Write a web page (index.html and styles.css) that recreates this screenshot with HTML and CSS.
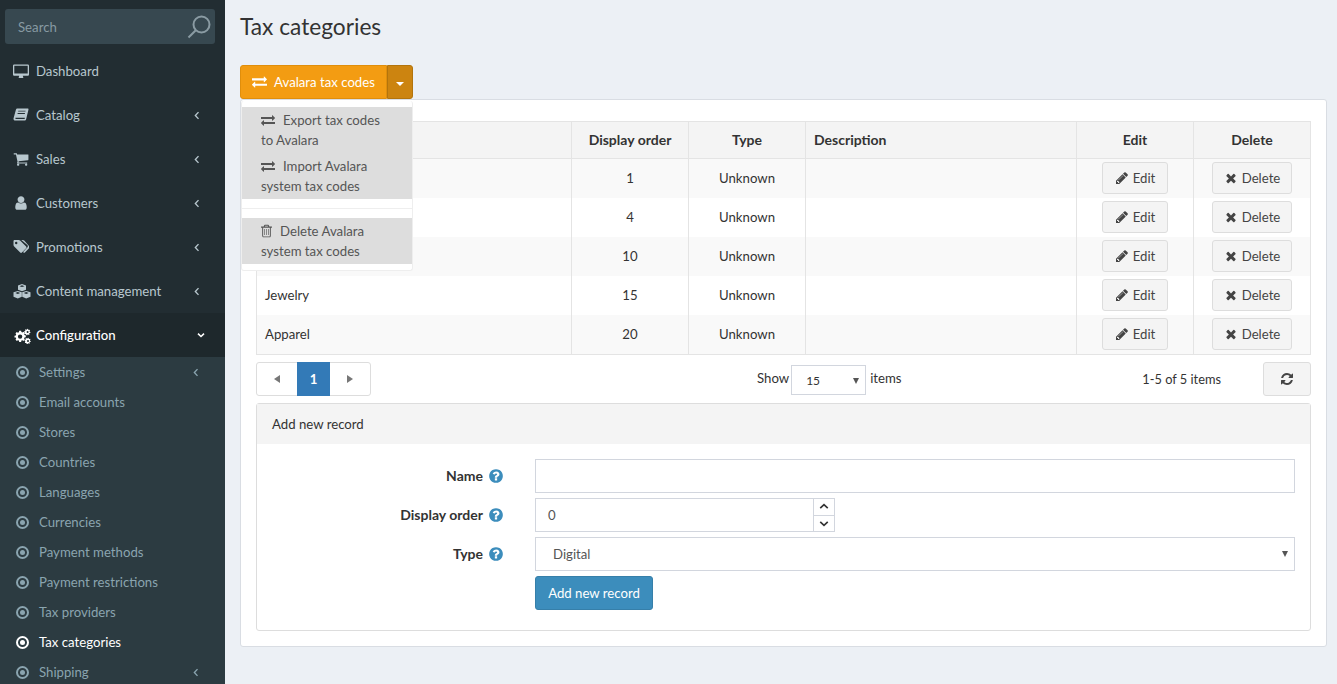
FILE: index.html
```html
<!DOCTYPE html>
<html lang="en">
<head>
    <meta charset="UTF-8">
    <meta name="viewport" content="width=device-width, initial-scale=1.0">
    <title>Tax categories</title>
    <link rel="stylesheet" href="styles.css">
</head>
<body>
    <svg class="sprite" aria-hidden="true">
        <symbol id="i-exchange" viewBox="0 0 1792 1792"><path d="M1792 1184v192q0 13-9.500 22.500t-22.500 9.500h-1376v192q0 13-9.500 22.500t-22.500 9.500q-12 0-24-10l-319-320q-9-9-9-22 0-14 9-23l320-320q9-9 23-9 13 0 22.500 9.500t9.500 22.500v192h1376q13 0 22.500 9.500t9.500 22.500zm0-544q0 14-9 23l-320 320q-9 9-23 9-13 0-22.500-9.500t-9.500-22.500v-192h-1376q-13 0-22.500-9.500t-9.500-22.500v-192q0-13 9.500-22.500t22.500-9.500h1376v-192q0-14 9-23t23-9q12 0 24 10l319 319q9 9 9 23z"/></symbol>
        <symbol id="i-times" viewBox="0 0 1792 1792"><path d="M1490 1322q0 40-28 68l-136 136q-28 28-68 28t-68-28l-294-294-294 294q-28 28-68 28t-68-28l-136-136q-28-28-28-68t28-68l294-294-294-294q-28-28-28-68t28-68l136-136q28-28 68-28t68 28l294 294 294-294q28-28 68-28t68 28l136 136q28 28 28 68t-28 68l-294 294 294 294q28 28 28 68z"/></symbol>
        <symbol id="i-pencil" viewBox="0 0 1792 1792"><path d="M491 1536l91-91-235-235-91 91v107h128v128h107zm523-928q0-22-22-22-10 0-17 7l-542 542q-7 7-7 17 0 22 22 22 10 0 17-7l542-542q7-7 7-17zm-54-192l416 416-832 832h-416v-416zm683 96q0 53-37 90l-166 166-416-416 166-165q36-38 90-38 53 0 91 38l235 234q37 39 37 91z"/></symbol>
        <symbol id="i-refresh" viewBox="0 0 1792 1792"><path d="M1639 1056q0 5-1 7-64 268-268 434.500t-478 166.500q-146 0-282.500-55t-243.500-157l-129 129q-19 19-45 19t-45-19-19-45v-448q0-26 19-45t45-19h448q26 0 45 19t19 45-19 45l-137 137q71 66 161 102t187 36q134 0 250-65t186-179q11-17 53-117 8-23 30-23h192q13 0 22.500 9.500t9.500 22.500zm25-800v448q0 26-19 45t-45 19h-448q-26 0-45-19t-19-45 19-45l138-138q-148-137-349-137-134 0-250 65t-186 179q-11 17-53 117-8 23-30 23h-199q-13 0-22.500-9.500t-9.500-22.500v-7q65-268 270-434.500t480-166.500q146 0 284 55.500t245 156.500l130-129q19-19 45-19t45 19 19 45z"/></symbol>
        <symbol id="i-question" viewBox="0 0 1792 1792"><path d="M1024 1376v-192q0-14-9-23t-23-9h-192q-14 0-23 9t-9 23v192q0 14 9 23t23 9h192q14 0 23-9t9-23zm256-672q0-88-55.500-163t-138.500-116-170-41q-243 0-371 213-15 24 8 42l132 100q7 6 19 6 16 0 25-12 53-68 86-92 34-24 86-24 48 0 85.500 26t37.500 59q0 38-20 61t-68 45q-63 28-115.500 86.500t-52.500 125.500v36q0 14 9 23t23 9h192q14 0 23-9t9-23q0-19 21.500-49.500t54.500-49.500q32-18 49-28.500t46-35 44.500-48 28-60.500 12.500-81zm384 192q0 209-103 385.500t-279.500 279.500-385.500 103-385.500-103-279.500-279.500-103-385.500 103-385.500 279.500-279.500 385.500-103 385.500 103 279.500 279.500 103 385.500z"/></symbol>
        <symbol id="i-user" viewBox="0 0 1792 1792"><path d="M1536 1399q0 109-62.500 187t-150.500 78h-854q-88 0-150.500-78t-62.500-187q0-85 8.500-160.500t31.500-152 58.500-131 94-89 134.500-34.500q131 128 313 128t313-128q76 0 134.500 34.500t94 89 58.500 131 31.500 152 8.500 160.500zm-256-887q0 159-112.500 271.500t-271.500 112.500-271.500-112.500-112.500-271.500 112.500-271.500 271.500-112.500 271.500 112.500 112.500 271.500z"/></symbol>
        <symbol id="i-cart" viewBox="0 0 1792 1792"><path d="M704 1536q0 52-38 90t-90 38-90-38-38-90 38-90 90-38 90 38 38 90zm896 0q0 52-38 90t-90 38-90-38-38-90 38-90 90-38 90 38 38 90zm128-1088v512q0 24-16.500 42.500t-40.500 21.500l-1044 122q13 60 13 70 0 16-24 64h920q26 0 45 19t19 45-19 45-45 19h-1024q-26 0-45-19t-19-45q0-11 8-31.500t16-36 21.500-40 15.500-29.500l-177-823h-204q-26 0-45-19t-19-45 19-45 45-19h256q16 0 28.500 6.500t19.500 15.500 13 24.500 8 26 5.500 29.500 4.500 26h1201q26 0 45 19t19 45z"/></symbol>
        <symbol id="i-desktop" viewBox="0 0 16 16"><path d="M1.300 1.500h13.400c.6 0 1.300.5 1.300 1.300v8.700c0 .7-.6 1.300-1.300 1.300H9.800c0 .8.600 1.300.600 1.700 0 .3-.2.500-.5.500H6.100c-.3 0-.5-.2-.5-.5 0-.4.600-.9.600-1.700H1.300C.6 12.800 0 12.200 0 11.500V2.800c0-.8.700-1.300 1.300-1.300zm0 1.200v7.900h13.400V2.700z"/></symbol>
        <symbol id="i-book" viewBox="0 0 16 16"><path d="M4.500 1.500h10.200c.6 0 .9.500.8 1l-2.300 9.400c-.2.900-.9 1.600-1.800 1.600H2.300c-1.100 0-2-.9-1.800-2.100l2.400-8.700c.2-.7.800-1.200 1.600-1.200zm.8 2.300-.2.800h7.300l.2-.8zm-.6 2.300-.2.800h7.300l.2-.8zM2.500 10.800c-.3.800.1 1.300.7 1.300h8c.2 0 .4-.1.500-.4l.2-.9z"/></symbol>
        <symbol id="i-tags" viewBox="0 0 16 16"><path d="M.5 2.200C.5 1.500 1 1 1.700 1h4c.5 0 1 .3 1.400.6l6 6c.5.500.5 1.200 0 1.700L8.900 13.500c-.5.500-1.200.500-1.700 0l-6-6C.8 7.100.5 6.600.5 6.100zm2.700.6a1.200 1.200 0 1 0 0 2.400 1.200 1.200 0 0 0 0-2.400zM8.300 1h1.500c.5 0 1 .3 1.400.6l5 5.700c.5.500.5 1.200 0 1.700l-4.300 4.500c-.4.400-1 .4-1.400 0l-.4-.4 4.200-4.500c.7-.7.700-1.800 0-2.500z"/></symbol>
        <symbol id="i-cubes" viewBox="0 0 18 16"><path d="M9 .6 13 2v4.200l-4 1.500-4-1.500V2zM9 1.800 6.500 2.700 9 3.600l2.500-.9zM4.800 7.400l4 1.400v4.400l-4 1.700-4.300-1.700V8.800zm0 1.200-2.500.9 2.500.9 2.400-.9zM13.200 7.400l4.300 1.400v4.400l-4.300 1.700-4-1.700V8.800zm0 1.200-2.400.9 2.400.9 2.500-.9z"/></symbol>
        <symbol id="i-cogs" viewBox="0 0 18 16"><path d="M6.200 3.200h1.900l.3 1.300 1 .4 1.100-.7 1.300 1.300-.7 1.100.4 1 1.300.3v1.800l-1.300.3-.4 1 .7 1.100-1.300 1.300-1.100-.7-1 .4-.3 1.300H6.200l-.3-1.300-1-.4-1.100.7-1.300-1.300.7-1.100-.4-1L1.500 10V8.200l1.300-.3.4-1-.7-1.100 1.300-1.300 1.100.7 1-.4zm.9 3.700a2.200 2.200 0 1 0 0 4.400 2.200 2.200 0 0 0 0-4.400zM14.500 1.200l.7.200.1.800.5.300.8-.2.500.7-.5.600.1.600.7.400-.1.800-.8.200-.3.500.3.800-.6.500-.7-.4-.6.1-.4.700-.8-.1-.2-.8-.5-.3-.8.200-.4-.7.500-.6-.1-.6-.7-.4.100-.8.800-.2.300-.5-.3-.8.700-.5.600.5.600-.1zm.1 2.300a1 1 0 1 0 0 2 1 1 0 0 0 0-2zM15 10.200l.7.200.1.800.5.300.8-.2.400.7-.5.600v.6l.7.400-.1.800-.8.200-.3.500.2.800-.6.400-.6-.5-.6.100-.4.700-.8-.1-.2-.8-.5-.3-.8.200-.4-.7.500-.6-.1-.6-.6-.4.100-.8.800-.2.300-.5-.3-.8.700-.4.600.5.600-.1zm0 2.300a1 1 0 1 0 0 2 1 1 0 0 0 0-2z"/></symbol>
        <symbol id="i-trash" viewBox="0 0 14 16"><path d="M5 0h4c.6 0 1 .4 1.100.9l.5 1.300h3c.2 0 .4.200.4.400v.8c0 .2-.2.400-.4.400h-1.100v10.100c0 1.100-.7 2.100-1.600 2.100H3.100c-.9 0-1.600-.9-1.600-2v-10.200H.4c-.2 0-.4-.2-.4-.4v-.8c0-.2.200-.4.400-.4h3l.5-1.300C4 .4 4.400 0 5 0zm-.1 2.200h4.200l-.4-1H5.300zM2.700 3.800v10.200c0 .6.300.9.400.9h7.800c.1 0 .4-.3.400-.9V3.800zM4.300 5.600h.8v7.400h-.8zm2.300 0h.8v7.400h-.8zm2.300 0h.8v7.400h-.8z"/></symbol>
    </svg>

    <div class="app">
        <aside class="sidebar">
            <div class="search">
                <span>Search</span>
                <svg class="search-icon" viewBox="0 0 24 24"><circle cx="14.500" cy="9.500" r="8"/><path d="M8.800 15.200 1.500 22.500"/></svg>
            </div>
            <ul class="menu">
                <li class="menu-item"><svg class="mi"><use href="#i-desktop"/></svg><span>Dashboard</span></li>
                <li class="menu-item"><svg class="mi"><use href="#i-book"/></svg><span>Catalog</span><svg class="angle" viewBox="0 0 8 12"><path d="M6 1.500 1.800 6 6 10.500"/></svg></li>
                <li class="menu-item"><svg class="mi"><use href="#i-cart"/></svg><span>Sales</span><svg class="angle" viewBox="0 0 8 12"><path d="M6 1.500 1.800 6 6 10.500"/></svg></li>
                <li class="menu-item"><svg class="mi"><use href="#i-user"/></svg><span>Customers</span><svg class="angle" viewBox="0 0 8 12"><path d="M6 1.500 1.800 6 6 10.500"/></svg></li>
                <li class="menu-item"><svg class="mi"><use href="#i-tags"/></svg><span>Promotions</span><svg class="angle" viewBox="0 0 8 12"><path d="M6 1.500 1.800 6 6 10.500"/></svg></li>
                <li class="menu-item"><svg class="mi wide"><use href="#i-cubes"/></svg><span>Content management</span><svg class="angle" viewBox="0 0 8 12"><path d="M6 1.500 1.800 6 6 10.500"/></svg></li>
                <li class="menu-item open"><svg class="mi wide"><use href="#i-cogs"/></svg><span>Configuration</span><svg class="angle down" viewBox="0 0 12 8"><path d="M1.500 2 6 6.200 10.500 2"/></svg></li>
            </ul>
            <ul class="submenu">
                <li class="sub-item"><span class="dot"></span><span>Settings</span><svg class="angle" viewBox="0 0 8 12"><path d="M6 1.500 1.800 6 6 10.500"/></svg></li>
                <li class="sub-item"><span class="dot"></span><span>Email accounts</span></li>
                <li class="sub-item"><span class="dot"></span><span>Stores</span></li>
                <li class="sub-item"><span class="dot"></span><span>Countries</span></li>
                <li class="sub-item"><span class="dot"></span><span>Languages</span></li>
                <li class="sub-item"><span class="dot"></span><span>Currencies</span></li>
                <li class="sub-item"><span class="dot"></span><span>Payment methods</span></li>
                <li class="sub-item"><span class="dot"></span><span>Payment restrictions</span></li>
                <li class="sub-item"><span class="dot"></span><span>Tax providers</span></li>
                <li class="sub-item active"><span class="dot"></span><span>Tax categories</span></li>
                <li class="sub-item"><span class="dot"></span><span>Shipping</span><svg class="angle" viewBox="0 0 8 12"><path d="M6 1.500 1.800 6 6 10.500"/></svg></li>
            </ul>
        </aside>

        <main class="content">
            <h1>Tax categories</h1>

            <div class="btn-group">
                <button class="btn-orange"><svg class="ico"><use href="#i-exchange"/></svg>Avalara tax codes</button>
                <button class="btn-toggle"><span class="caret"></span></button>
                <ul class="dropdown">
                    <li><svg class="ico"><use href="#i-exchange"/></svg>Export tax codes to Avalara</li>
                    <li><svg class="ico"><use href="#i-exchange"/></svg>Import Avalara system tax codes</li>
                    <li class="divider"></li>
                    <li><svg class="ico trash"><use href="#i-trash"/></svg>Delete Avalara system tax codes</li>
                </ul>
            </div>

            <section class="box">
                <table class="grid">
                    <colgroup>
                        <col class="c-name"><col class="c-num"><col class="c-num"><col>
                        <col class="c-num"><col class="c-num">
                    </colgroup>
                    <thead>
                        <tr><th></th><th>Display order</th><th>Type</th><th class="left">Description</th><th>Edit</th><th>Delete</th></tr>
                    </thead>
                    <tbody>
                        <tr>
                            <td></td><td class="mid">1</td><td class="mid">Unknown</td><td></td>
                            <td class="mid"><button class="btn btn-edit"><svg class="ico"><use href="#i-pencil"/></svg>Edit</button></td>
                            <td class="mid"><button class="btn"><svg class="ico"><use href="#i-times"/></svg>Delete</button></td>
                        </tr>
                        <tr>
                            <td></td><td class="mid">4</td><td class="mid">Unknown</td><td></td>
                            <td class="mid"><button class="btn btn-edit"><svg class="ico"><use href="#i-pencil"/></svg>Edit</button></td>
                            <td class="mid"><button class="btn"><svg class="ico"><use href="#i-times"/></svg>Delete</button></td>
                        </tr>
                        <tr>
                            <td></td><td class="mid">10</td><td class="mid">Unknown</td><td></td>
                            <td class="mid"><button class="btn btn-edit"><svg class="ico"><use href="#i-pencil"/></svg>Edit</button></td>
                            <td class="mid"><button class="btn"><svg class="ico"><use href="#i-times"/></svg>Delete</button></td>
                        </tr>
                        <tr>
                            <td>Jewelry</td><td class="mid">15</td><td class="mid">Unknown</td><td></td>
                            <td class="mid"><button class="btn btn-edit"><svg class="ico"><use href="#i-pencil"/></svg>Edit</button></td>
                            <td class="mid"><button class="btn"><svg class="ico"><use href="#i-times"/></svg>Delete</button></td>
                        </tr>
                        <tr>
                            <td>Apparel</td><td class="mid">20</td><td class="mid">Unknown</td><td></td>
                            <td class="mid"><button class="btn btn-edit"><svg class="ico"><use href="#i-pencil"/></svg>Edit</button></td>
                            <td class="mid"><button class="btn"><svg class="ico"><use href="#i-times"/></svg>Delete</button></td>
                        </tr>
                    </tbody>
                </table>

                <div class="pager-row">
                    <div class="pager">
                        <span class="page-arrow"><span class="tri left"></span></span>
                        <span class="page-num">1</span>
                        <span class="page-arrow"><span class="tri right"></span></span>
                    </div>
                    <div class="page-size">
                        <span>Show</span>
                        <div class="size-select"><span>15</span><span class="tri down"></span></div>
                        <span>items</span>
                    </div>
                    <div class="page-info">1-5 of 5 items</div>
                    <button class="btn btn-refresh"><svg class="ico"><use href="#i-refresh"/></svg></button>
                </div>

                <div class="panel">
                    <div class="panel-heading">Add new record</div>
                    <div class="panel-body">
                        <div class="form-row">
                            <label>Name</label><svg class="help"><use href="#i-question"/></svg>
                            <div class="field"></div>
                        </div>
                        <div class="form-row">
                            <label>Display order</label><svg class="help"><use href="#i-question"/></svg>
                            <div class="field field-num">
                                <span>0</span>
                                <div class="spin">
                                    <span><svg viewBox="0 0 12 8"><path d="M1.500 6 6 1.800 10.500 6"/></svg></span>
                                    <span><svg viewBox="0 0 12 8"><path d="M1.500 2 6 6.200 10.500 2"/></svg></span>
                                </div>
                            </div>
                        </div>
                        <div class="form-row">
                            <label>Type</label><svg class="help"><use href="#i-question"/></svg>
                            <div class="field field-select"><span>Digital</span><span class="tri down"></span></div>
                        </div>
                        <div class="form-row">
                            <button class="btn-blue">Add new record</button>
                        </div>
                    </div>
                </div>
            </section>
        </main>
    </div>
</body>
</html>
```

FILE: styles.css
```css
* {
    box-sizing: border-box;
}
html, body {
    height: 100%;
    margin: 0;
    overflow: hidden;
}
body {
    font-family: "Lato", "Noto Sans", sans-serif;
    font-size: 13.2px;
    color: #333;
    background-color: #ecf0f5;
}
ul {
    list-style: none;
    margin: 0;
    padding: 0;
}
button {
    font-family: inherit;
    font-size: 13.2px;
}
.sprite {
    position: absolute;
    width: 0;
    height: 0;
}
.app {
    display: flex;
    height: 684px;
}

/* sidebar */
.sidebar {
    width: 225px;
    flex: none;
    height: 100%;
    overflow: hidden;
    background-color: #222d32;
    color: #b8c7ce;
    padding-top: 9px;
}
.search {
    display: flex;
    align-items: center;
    justify-content: space-between;
    height: 35px;
    margin: 0 10px 5px 5px;
    padding: 0 4px 0 13px;
    background-color: #374850;
    border-radius: 3px;
    color: #879aa3;
}
.search-icon {
    width: 24px;
    height: 24px;
    fill: none;
    stroke: #8a9ba3;
    stroke-width: 2;
}
.menu-item {
    display: flex;
    align-items: center;
    height: 44px;
    padding: 0 25px 0 13px;
}
.menu-item span {
    flex: 1;
}
.menu-item.open {
    background-color: #1e282c;
    color: #fff;
    font-weight: 500;
    padding-right: 20px;
}
.mi {
    width: 16px;
    height: 16px;
    margin-right: 7px;
    fill: currentColor;
    flex: none;
}
.mi.wide {
    width: 18px;
    height: 17px;
    margin-right: 5px;
}
.angle {
    width: 6px;
    height: 9px;
    fill: none;
    stroke: currentColor;
    stroke-width: 1.800;
    flex: none;
}
.angle.down {
    width: 8px;
    height: 6px;
    stroke-width: 2.400;
}
.submenu {
    background-color: #2c3b41;
    color: #8aa4af;
}
.sub-item {
    display: flex;
    align-items: center;
    height: 30px;
    padding: 0 26px 0 16px;
}
.sub-item span:nth-child(2) {
    flex: 1;
}
.dot {
    position: relative;
    width: 13px;
    height: 13px;
    margin-right: 10px;
    border: 2px solid currentColor;
    border-radius: 50%;
    flex: none;
}
.dot::after {
    content: "";
    position: absolute;
    left: 2px;
    top: 2px;
    width: 5px;
    height: 5px;
    border-radius: 50%;
    background-color: currentColor;
}
.sub-item.active {
    color: #fff;
}
.sub-item.active .dot {
    border-color: #fff;
}

/* content */
.content {
    flex: 1;
    min-width: 0;
    padding: 0 10px 0 15px;
}
h1 {
    margin: 0;
    height: 65px;
    padding-top: 13px;
    font-size: 22.700px;
    line-height: 28px;
    font-weight: 400;
}
.ico {
    width: 14px;
    height: 14px;
    fill: currentColor;
    vertical-align: -2px;
}
.btn-group {
    position: relative;
    display: flex;
    width: 173px;
    height: 34px;
    z-index: 2;
}
.btn-orange {
    width: 147px;
    padding: 0;
    background-color: #f39c12;
    border: 1px solid #e08e0b;
    border-radius: 3px 0 0 3px;
    color: #fff;
}
.btn-orange .ico {
    width: 15px;
    height: 15px;
    margin-right: 7px;
}
.btn-toggle {
    width: 26px;
    padding: 0;
    background-color: #cc8410;
    border: 1px solid #b3740c;
    border-radius: 0 3px 3px 0;
}
.caret {
    display: inline-block;
    border-top: 4px solid #fff;
    border-left: 4px solid transparent;
    border-right: 4px solid transparent;
    vertical-align: middle;
}
.dropdown {
    position: absolute;
    left: 1px;
    top: 36px;
    width: 172px;
    padding: 6px 0;
    background-color: #fff;
    border: 1px solid #eee;
    border-top-width: 0;
    border-radius: 3px;
    color: #555;
}
.dropdown li {
    padding: 3px 19px;
    line-height: 20px;
    background-color: #ddd;
}
.dropdown li .ico {
    margin-right: 8px;
}
.dropdown li .trash {
    width: 11px;
}
.dropdown .divider {
    height: 1px;
    margin: 9px 0;
    padding: 0;
    background-color: #eee;
}
.box {
    height: 548px;
    padding: 21px 15px 0;
    background-color: #fff;
    border: 1px solid #d9dde3;
    border-radius: 3px;
}

/* table */
.grid {
    width: 1055px;
    border-collapse: collapse;
    table-layout: fixed;
}
.c-name {
    width: 315px;
}
.c-num {
    width: 117px;
}
.grid th, .grid td {
    border: 1px solid #e4e4e4;
    padding: 0 8px;
}
.grid td {
    border-top: 0;
    border-bottom: 0;
    height: 39px;
}
.grid tbody tr:nth-child(odd) {
    background-color: #f9f9f9;
}
.grid tbody tr:last-child td {
    height: 40px;
    border-bottom: 1px solid #e4e4e4;
}
.grid th {
    height: 37px;
    padding-bottom: 2px;
    background-color: #f4f4f4;
    font-size: 14px;
    font-weight: 700;
}
.grid th.left {
    text-align: left;
}
.mid {
    text-align: center;
}
.btn {
    height: 32px;
    padding: 0 11px;
    background-color: #f4f4f4;
    border: 1px solid #ddd;
    border-radius: 3px;
    color: #444;
}
.btn .ico {
    margin-right: 4px;
}
.btn-edit {
    width: 66px;
    padding: 0;
}

/* pager */
.pager-row {
    display: flex;
    align-items: center;
    margin-top: 7px;
    height: 34px;
}
.pager {
    display: flex;
    width: 115px;
    height: 34px;
    border: 1px solid #ddd;
    border-radius: 3px;
}
.page-arrow {
    flex: 1;
    display: flex;
    align-items: center;
    justify-content: center;
}
.page-num {
    width: 33px;
    height: 34px;
    margin-top: -1px;
    background-color: #337ab7;
    color: #fff;
    font-weight: 700;
    text-align: center;
    line-height: 34px;
}
.tri {
    display: inline-block;
    width: 0;
    height: 0;
}
.tri.left {
    border-top: 4px solid transparent;
    border-bottom: 4px solid transparent;
    border-right: 6px solid #777;
}
.tri.right {
    border-top: 4px solid transparent;
    border-bottom: 4px solid transparent;
    border-left: 6px solid #777;
}
.tri.down {
    border-left: 3.500px solid transparent;
    border-right: 3.500px solid transparent;
    border-top: 6px solid #555;
}
.page-size {
    display: flex;
    align-items: center;
    margin-left: 386px;
}
.page-size > span {
    margin-bottom: 3px;
}
.size-select {
    display: flex;
    align-items: center;
    justify-content: space-between;
    width: 75px;
    height: 30px;
    margin: 1px 4px 0 2px;
    padding: 2px 6px 0 14px;
    border: 1px solid #d2d6de;
    font-size: 12px;
}
.page-info {
    margin-left: auto;
    margin-right: 42px;
    font-size: 12.800px;
}
.btn-refresh {
    width: 48px;
    height: 34px;
    padding: 0;
}
.btn-refresh .ico {
    margin: 0;
}

/* add form */
.panel {
    margin-top: 7px;
    height: 228px;
    border: 1px solid #ddd;
    border-radius: 3px;
}
.panel-heading {
    height: 40px;
    padding: 0 15px;
    line-height: 40px;
    background-color: #f4f4f4;
}
.panel-body {
    padding-top: 15px;
}
.form-row {
    display: flex;
    align-items: center;
    justify-content: flex-start;
    height: 34px;
    margin-bottom: 5px;
    padding-left: 278px;
    position: relative;
}
.form-row label {
    position: absolute;
    right: 827px;
    padding-bottom: 2px;
    font-size: 14px;
    font-weight: 700;
}
.help {
    position: absolute;
    left: 231px;
    width: 16px;
    height: 16px;
    fill: #3c8dbc;
}
.field {
    width: 760px;
    height: 34px;
    border: 1px solid #d2d6de;
}
.field-num {
    display: flex;
    align-items: center;
    justify-content: space-between;
    width: 300px;
    padding-left: 12px;
    color: #555;
}
.spin {
    display: flex;
    flex-direction: column;
    width: 21px;
    height: 100%;
    border-left: 1px solid #d2d6de;
}
.spin span {
    flex: 1;
    display: flex;
    align-items: center;
    justify-content: center;
}
.spin span + span {
    border-top: 1px solid #d2d6de;
}
.spin svg {
    width: 10px;
    height: 7px;
    fill: none;
    stroke: #333;
    stroke-width: 2;
}
.field-select {
    display: flex;
    align-items: center;
    justify-content: space-between;
    padding: 0 6px 0 17px;
    color: #555;
}
.btn-blue {
    width: 118px;
    height: 34px;
    padding: 0;
    background-color: #3c8dbc;
    border: 1px solid #367fa9;
    border-radius: 3px;
    color: #fff;
}
```
